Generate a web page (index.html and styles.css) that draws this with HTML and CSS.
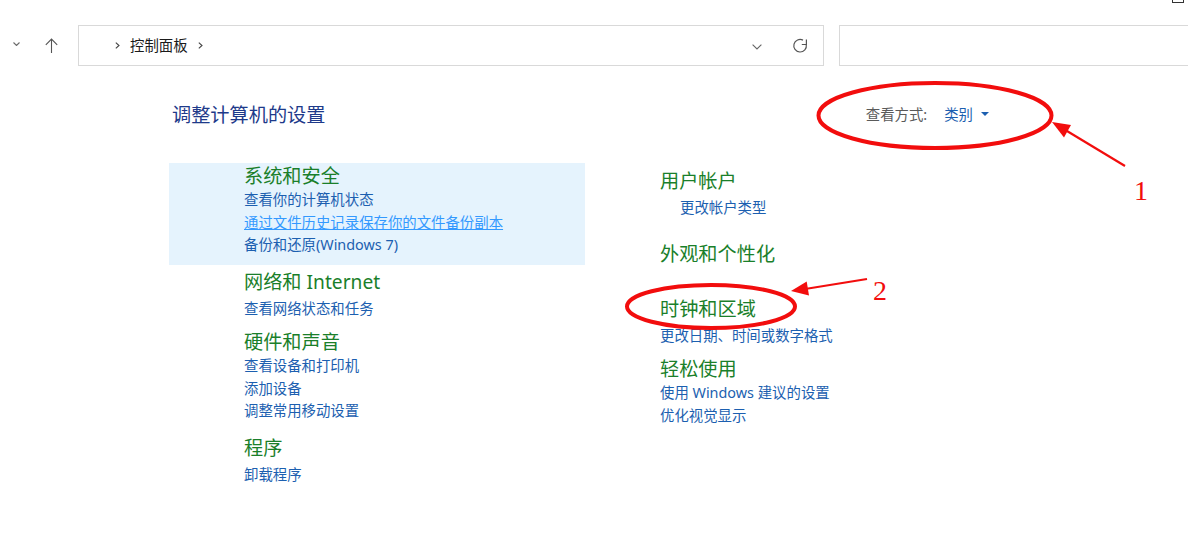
FILE: index.html
```html
<!DOCTYPE html>
<html lang="zh-CN">
<head>
    <meta charset="UTF-8">
    <meta name="viewport" content="width=device-width, initial-scale=1.0">
    <title>控制面板</title>
    <link rel="stylesheet" href="styles.css">
</head>
<body>
    <div class="window-btn"></div>

    <header class="toolbar">
        <div class="nav">
            <span class="nav-btn nav-recent">
                <svg width="7" height="4" viewBox="0 0 7 4"><path d="M0.5 0.5 L3.5 3.5 L6.5 0.5" fill="none" stroke="#6b6b6b" stroke-width="1.1"/></svg>
            </span>
            <span class="nav-btn nav-up">
                <svg width="13" height="15" viewBox="0 0 13 15"><path d="M6.5 15 V1.2 M0.8 6.8 L6.5 1 L12.2 6.8" fill="none" stroke="#555" stroke-width="1.1"/></svg>
            </span>
        </div>
        <div class="address">
            <svg class="crumb-sep" width="5" height="7" viewBox="0 0 5 7"><path d="M0.8 0.6 L4 3.5 L0.8 6.4" fill="none" stroke="#444" stroke-width="1.1"/></svg>
            <span class="crumb">控制面板</span>
            <svg class="crumb-sep" width="5" height="7" viewBox="0 0 5 7"><path d="M0.8 0.6 L4 3.5 L0.8 6.4" fill="none" stroke="#444" stroke-width="1.1"/></svg>
            <span class="address-space"></span>
            <svg class="addr-drop" width="10" height="6" viewBox="0 0 10 6"><path d="M0.6 0.6 L5 5 L9.4 0.6" fill="none" stroke="#666" stroke-width="1.1"/></svg>
            <svg class="addr-refresh" width="16" height="16" viewBox="0 0 16 16">
                <path d="M11 2.1 A6.3 6.3 0 1 0 14.3 6.6" fill="none" stroke="#555" stroke-width="1.2"/>
                <path d="M14.4 1.6 V6.5 H9.8" fill="none" stroke="#555" stroke-width="1.2"/>
            </svg>
        </div>
        <div class="search"></div>
    </header>

    <main class="panel">
        <div class="panel-head">
            <h1 class="panel-title">调整计算机的设置</h1>
            <div class="view-by">
                <span class="view-label">查看方式:</span>
                <a class="view-value">类别</a>
                <span class="view-caret"></span>
            </div>
        </div>

        <div class="categories">
            <div class="col col-left">
                <section class="group group-hover">
                    <h2 class="group-title">系统和安全</h2>
                    <ul class="links">
                        <li><a class="link">查看你的计算机状态</a></li>
                        <li><a class="link link-hot">通过文件历史记录保存你的文件备份副本</a></li>
                        <li><a class="link">备份和还原(Windows 7)</a></li>
                    </ul>
                </section>
                <section class="group group-short">
                    <h2 class="group-title">网络和 Internet</h2>
                    <ul class="links">
                        <li><a class="link">查看网络状态和任务</a></li>
                    </ul>
                </section>
                <section class="group">
                    <h2 class="group-title">硬件和声音</h2>
                    <ul class="links">
                        <li><a class="link">查看设备和打印机</a></li>
                        <li><a class="link">添加设备</a></li>
                        <li><a class="link">调整常用移动设置</a></li>
                    </ul>
                </section>
                <section class="group group-short">
                    <h2 class="group-title">程序</h2>
                    <ul class="links">
                        <li><a class="link">卸载程序</a></li>
                    </ul>
                </section>
            </div>

            <div class="col col-right">
                <section class="group group-short group-users">
                    <h2 class="group-title">用户帐户</h2>
                    <ul class="links">
                        <li><a class="link link-shield">更改帐户类型</a></li>
                    </ul>
                </section>
                <section class="group">
                    <h2 class="group-title">外观和个性化</h2>
                </section>
                <section class="group group-short">
                    <h2 class="group-title">时钟和区域</h2>
                    <ul class="links">
                        <li><a class="link">更改日期、时间或数字格式</a></li>
                    </ul>
                </section>
                <section class="group">
                    <h2 class="group-title">轻松使用</h2>
                    <ul class="links">
                        <li><a class="link">使用 Windows 建议的设置</a></li>
                        <li><a class="link">优化视觉显示</a></li>
                    </ul>
                </section>
            </div>
        </div>
    </main>

    <!-- red markup drawn over the screenshot -->
    <svg class="marks" width="1188" height="558" viewBox="0 0 1188 558">
        <ellipse cx="935" cy="115.5" rx="116.5" ry="32.5" fill="none" stroke="#f20d0d" stroke-width="4"/>
        <line x1="1125" y1="166" x2="1062" y2="128" stroke="#f20d0d" stroke-width="2.2"/>
        <polygon points="1052,122 1071,125 1064,137.5" fill="#f20d0d"/>
        <text class="mark-num" x="1141" y="200" text-anchor="middle">1</text>

        <ellipse cx="711" cy="306.5" rx="84" ry="21.5" fill="none" stroke="#f20d0d" stroke-width="4"/>
        <line x1="867" y1="279" x2="802" y2="289.5" stroke="#f20d0d" stroke-width="2.2"/>
        <polygon points="791,291 806.7,281.5 809,295.5" fill="#f20d0d"/>
        <text class="mark-num" x="880" y="300" text-anchor="middle">2</text>
    </svg>
</body>
</html>
```

FILE: styles.css
```css
* {
    box-sizing: border-box;
    margin: 0;
    padding: 0;
}

body {
    width: 1188px;
    height: 558px;
    overflow: hidden;
    position: relative;
    background-color: #fff;
    font-family: "Noto Sans", "Noto Sans CJK SC", sans-serif;
    color: #1a1a1a;
}

a {
    text-decoration: none;
    cursor: pointer;
}

ul {
    list-style: none;
}

/* window chrome leftover at the top right */
.window-btn {
    position: absolute;
    top: -8px;
    left: 1172px;
    width: 12px;
    height: 11px;
    border: 1px solid #333;
}

/* address bar */
.toolbar {
    display: flex;
    height: 66px;
    padding-top: 25px;
}

.nav {
    display: flex;
    align-items: center;
    width: 78px;
}

.nav-btn {
    display: flex;
    justify-content: center;
    align-items: center;
}

.nav-recent {
    width: 33px;
    margin-top: -3px;
}

.nav-up {
    width: 36px;
}

.address {
    display: flex;
    align-items: center;
    width: 746px;
    height: 41px;
    border: 1px solid #d9d9d9;
    padding-right: 15px;
}

.crumb-sep {
    margin-left: 10px;
}

.crumb-sep:first-child {
    margin-left: 36px;
}

.crumb {
    margin-left: 10px;
    font-size: 14.4px;
    line-height: 20px;
}

.address-space {
    flex: 1;
}

.addr-drop {
    margin-top: 2px;
}

.addr-refresh {
    margin-left: 30px;
}

.search {
    flex: 1;
    height: 41px;
    margin-left: 15px;
    margin-right: -4px;
    border: 1px solid #d9d9d9;
}

/* control panel content */
.panel {
    width: 820px;
    margin: 36px 0 0 169px;
}

.panel-head {
    display: flex;
    justify-content: space-between;
    align-items: center;
}

.panel-title {
    padding-left: 3px;
    font-size: 19.2px;
    font-weight: normal;
    line-height: 26px;
    color: #1e3a8a;
}

.view-by {
    display: flex;
    align-items: center;
    font-size: 14.4px;
    line-height: 20px;
}

.view-label {
    color: #5a5a5a;
}

.view-value {
    margin-left: 17px;
    color: #1c5fb0;
}

.view-caret {
    width: 0;
    height: 0;
    margin: -3px 0 0 8px;
    border-left: 4px solid transparent;
    border-right: 4px solid transparent;
    border-top: 4px solid #1c5fb0;
}

.categories {
    display: grid;
    grid-template-columns: 416px 1fr;
    column-gap: 75px;
    margin-top: 35px;
}

.col-left .group {
    padding-left: 75px;
}

.col-right {
    padding-top: 5px;
}

.group {
    min-height: 50.5px;
    padding-bottom: 8px;
    margin-bottom: 4px;
}

.group-short {
    padding-bottom: 5px;
}

.group-short .links {
    padding-top: 3px;
}

.group-hover {
    background-color: #e5f3fd;
}

.group-users {
    min-height: 69px;
}

.group-title {
    font-size: 19.2px;
    font-weight: normal;
    line-height: 26px;
    color: #1a7f2a;
}

.links {
    font-size: 14.4px;
    line-height: 22.5px;
}

.link {
    color: #1c5fb0;
}

.link-hot {
    color: #3399ff;
    text-decoration: underline;
}

.link-shield {
    padding-left: 20px;
}

/* annotation layer */
.marks {
    position: absolute;
    top: 0;
    left: 0;
    pointer-events: none;
}

.mark-num {
    font-family: "Liberation Serif", serif;
    font-size: 28px;
    fill: #f20d0d;
}
```
